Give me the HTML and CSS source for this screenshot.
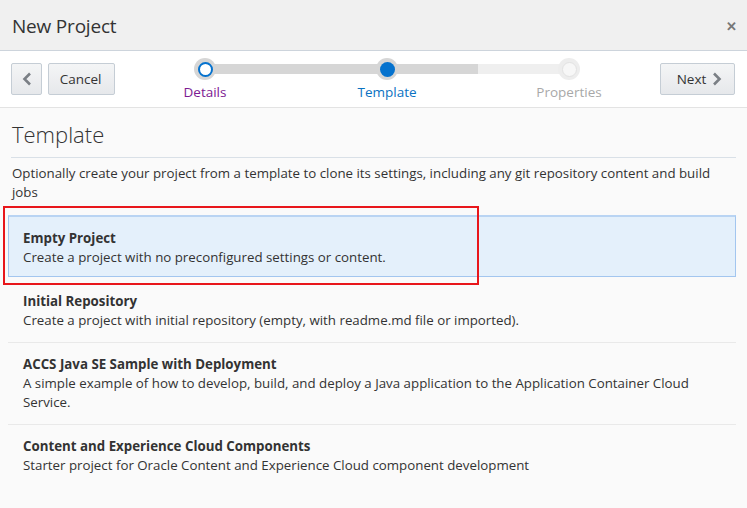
FILE: index.html
```html
<!DOCTYPE html>
<html>
<head>
<meta charset="utf-8">
<link rel="stylesheet" href="styles.css">
</head>
<body>
<div class="dialog">
  <div class="header">
    <div class="title">New Project</div>
    <div class="close">&#x2715;</div>
  </div>
  <div class="toolbar">
    <div class="btn-group">
      <button class="btn btn-icon"><svg width="10" height="14" viewBox="0 0 10 14"><path d="M8 1.5 L2.5 7 L8 12.5" fill="none" stroke="#7a7f85" stroke-width="2.6"/></svg></button>
      <button class="btn btn-cancel">Cancel</button>
    </div>
    <div class="stepper">
      <div class="track"><div class="track-fill"></div></div>
      <div class="step done">
        <div class="dot"><div class="inner"></div></div>
        <div class="label">Details</div>
      </div>
      <div class="step current">
        <div class="dot"><div class="inner"></div></div>
        <div class="label">Template</div>
      </div>
      <div class="step future">
        <div class="dot"><div class="inner"></div></div>
        <div class="label">Properties</div>
      </div>
    </div>
    <button class="btn btn-next">Next <svg width="10" height="14" viewBox="0 0 10 14"><path d="M2 1.5 L7.5 7 L2 12.5" fill="none" stroke="#7a7f85" stroke-width="2.6"/></svg></button>
  </div>
  <div class="content">
    <h1 class="heading">Template</h1>
    <p class="intro">Optionally create your project from a template to clone its settings, including any git repository content and build jobs</p>
    <div class="list">
      <div class="item selected">
        <div class="item-title">Empty Project</div>
        <div class="item-desc">Create a project with no preconfigured settings or content.</div>
        <div class="highlight"></div>
      </div>
      <div class="item">
        <div class="item-title">Initial Repository</div>
        <div class="item-desc">Create a project with initial repository (empty, with readme.md file or imported).</div>
      </div>
      <div class="item">
        <div class="item-title">ACCS Java SE Sample with Deployment</div>
        <div class="item-desc">A simple example of how to develop, build, and deploy a Java application to the Application Container Cloud Service.</div>
      </div>
      <div class="item last">
        <div class="item-title">Content and Experience Cloud Components</div>
        <div class="item-desc">Starter project for Oracle Content and Experience Cloud component development</div>
      </div>
    </div>
  </div>
</div>
</body>
</html>
```

FILE: styles.css
```css
* { box-sizing: border-box; }
html, body { margin: 0; padding: 0; }
body {
  font-family: "Open Sans", "Noto Sans", sans-serif;
  color: #333;
  background: #fafafa;
  width: 747px;
  height: 508px;
  overflow: hidden;
}
.dialog { display: flex; flex-direction: column; height: 508px; }
.header {
  height: 51px;
  background: #f0f0f0;
  border-bottom: 1px solid #cdd4dc;
  display: flex;
  align-items: center;
  justify-content: space-between;
  padding: 2px 10px 0 12px;
}
.title { font-size: 19px; color: #333; letter-spacing: -0.2px; }
.close { font-size: 13px; color: #777; font-weight: bold; }
.toolbar {
  height: 57px;
  background: #fff;
  border-bottom: 1px solid #e3e3e3;
  display: flex;
  align-items: flex-start;
  padding: 12px 12px 0 11px;
}
.btn-group { display: flex; gap: 6px; }
.btn {
  height: 32px;
  border: 1px solid #c5cdd5;
  border-radius: 2px;
  background: linear-gradient(#f4f5f6, #e6e8eb);
  font-family: inherit;
  font-size: 13.5px;
  color: #333;
  display: flex;
  align-items: center;
  justify-content: center;
  padding: 0;
}
.btn-icon { width: 31px; }
.btn-cancel { width: 67px; padding-right: 2px; }
.btn-next { width: 75px; margin-left: auto; gap: 6px; padding-left: 4px; }
.stepper {
  position: relative;
  display: grid;
  grid-template-columns: 100px 100px 100px;
  column-gap: 82px;
  margin-left: 40px;
  margin-top: -5px;
}
.track {
  position: absolute;
  left: 50px;
  width: 364px;
  top: 6px;
  height: 10px;
  background: #efefef;
}
.track-fill { width: 273px; height: 10px; background: #d6d6d6; }
.step { position: relative; display: flex; flex-direction: column; align-items: center; }
.dot {
  width: 22px; height: 22px; border-radius: 50%;
  background: #d6d6d6;
  display: flex; align-items: center; justify-content: center;
}
.inner { width: 15px; height: 15px; border-radius: 50%; }
.done .inner { background: #fff; border: 2px solid #0572ce; }
.current .inner { background: #0572ce; }
.future .dot { background: #ededed; }
.future .inner { background: #f7f7f7; border: 1px solid #e2e2e2; }
.label { font-size: 13.5px; margin-top: 3px; line-height: 19px; }
.done .label { color: #7d1a92; }
.current .label { color: #0a72c2; }
.future .label { color: #a8a8a8; }
.content { flex: 1; background: #fafafa; padding: 0 11px 0 11px; }
.heading {
  margin: 0;
  font-weight: 300;
  font-size: 22px;
  color: #333;
  padding: 12px 0 9px 1px;
  line-height: 28px;
  border-bottom: 1px solid #d9e0e7;
}
.intro {
  margin: 6px 0 0 1px;
  font-size: 13.3px;
  line-height: 19px;
}
.list { margin: 13px 0 0 -3px; }
.item {
  position: relative;
  padding: 12px 14px 12px 15px;
  border-bottom: 1px solid #e9e9e9;
  font-size: 13.3px;
  line-height: 19px;
}
.item.last { border-bottom: none; }
.item.selected {
  background: #e4f0fb;
  border: 1px solid #a3c6ef;
  border-top: 2px solid #b9d4f3;
  padding: 12px 14px 9px 14px;
  margin-bottom: 3px;
}
.item-title { font-weight: bold; }
.highlight {
  position: absolute;
  left: -6px;
  top: -11px;
  width: 476px;
  height: 79px;
  border: 2px solid #e8161b;
  pointer-events: none;
}
```
